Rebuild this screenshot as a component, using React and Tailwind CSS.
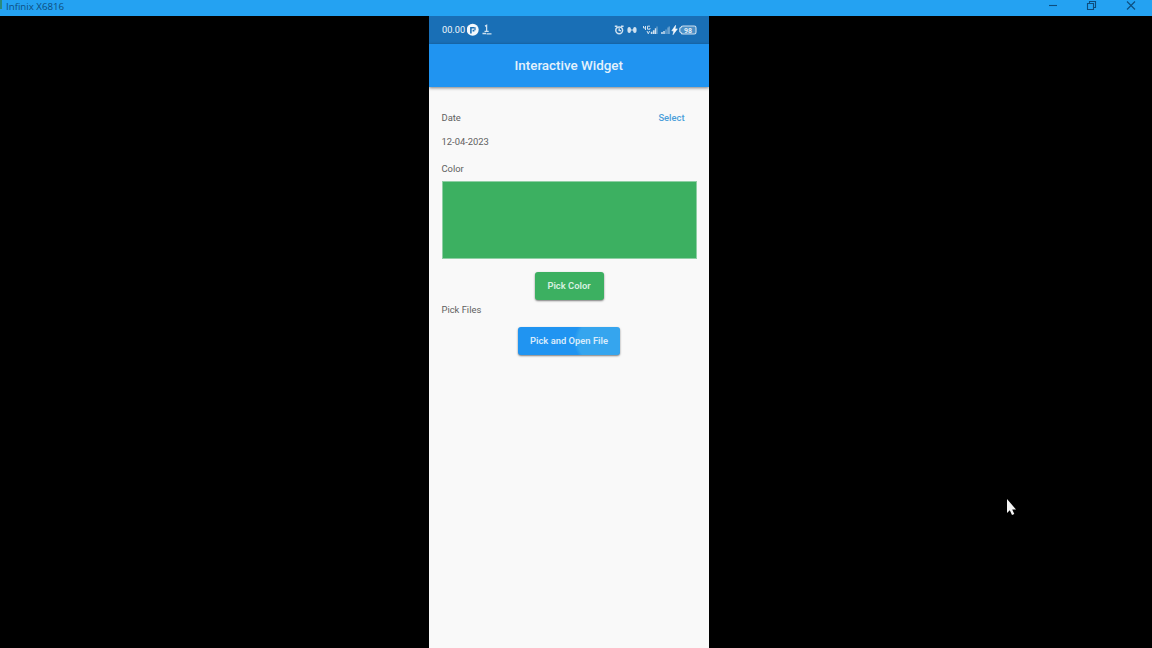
import React from 'react';

function TitleBar() {
  return (
    <header className="flex h-4 w-full shrink-0 items-start justify-between overflow-hidden bg-[#24a2f2]">
      <div className="flex items-start">
        <div className="h-[9px] w-[2px] bg-[#2b8a7c]" />
        <span className="ml-1 font-['Open_Sans',sans-serif] text-[9.7px] leading-[13px] text-[#0d4d7e]">Infinix X6816</span>
      </div>
      <svg width="104" height="12" viewBox="0 0 104 12" fill="none" stroke="#0d4d7e" strokeWidth="1.1">
        <path d="M1 5.5h8" />
        <path d="M39.5 3.5h6v6h-6zM41.5 3.5v-2h6v6h-2" />
        <path d="M79 1.5l8 8M87 1.5l-8 8" />
      </svg>
    </header>
  );
}

function StatusBar() {
  return (
    <div className="flex h-7 shrink-0 items-center justify-between bg-[#196fb6] pr-3 pl-[13px]">
      <div className="flex items-center">
        <span className="w-[23px] whitespace-nowrap text-[9.2px] leading-3 text-[#f0f7fc]">00.00</span>
        <svg className="ml-[2px]" width="28" height="14" viewBox="0 0 28 14">
          <circle cx="5.7" cy="6.8" r="6" fill="#f3f8fc" />
          <path d="M3.9 10.5V4.8h3.6M5.6 7.6h1.8" fill="none" stroke="#196fb6" strokeWidth="1.6" />
          <path d="M8 4.3v3" stroke="#196fb6" strokeWidth="1.2" />
          <path d="M18 3.2l1.6-.8v5.8M17.5 8.3h4.2M15.5 10.5h3.5M19.5 10.8h5" fill="none" stroke="#cfe1f0" strokeWidth="1.3" />
        </svg>
      </div>
      <svg width="83" height="14" viewBox="0 0 83 14" fill="none" stroke="#cfe1f0">
        <circle cx="5.2" cy="7.3" r="3.4" strokeWidth="1.5" />
        <path d="M.8 3.2h2.6M9.6 3.2H7M5.2 5.2v2.3l1.8.3" strokeWidth="1.4" />
        <ellipse cx="15.2" cy="7" rx="1.8" ry="3" fill="#cfe1f0" stroke="none" />
        <ellipse cx="20.8" cy="7" rx="1.8" ry="3" fill="#cfe1f0" stroke="none" />
        <path d="M17 7h2" strokeWidth="1.2" />
        <path d="M29.5 3v2h2M31.5 3v4M36 3.2h-2.5v3h2.5V5M33 8l1.3 2.8L35.6 8" strokeWidth="1" />
        <path d="M37.6 11V8.8M39.7 11V7.3M41.6 11V5.3" strokeWidth="1.6" />
        <path d="M43 11V3.5" stroke="#6da4d0" strokeWidth="1.3" />
        <path d="M48 11V9M50 11V8" strokeWidth="1.5" />
        <path d="M52 11V6.5M54 11V4.5M55.2 11V3.5" stroke="#6da4d0" strokeWidth="1.4" />
        <path d="M61.6 2.3L57.8 7.8h2l-.8 3.9 4.4-5.8h-2.3z" fill="#f3f8fc" stroke="#f3f8fc" strokeWidth=".6" />
        <path d="M69 3h11.2q1.8 0 1.8 1.8v4.4q0 1.8-1.8 1.8H69q-1.8 0-1.8-1.3l-1.4-1V5.3l1.4-1Q67.2 3 69 3z" fill="#4a8fc6" strokeWidth="1.1" />
        <text x="70" y="9.6" fill="#e7f1f9" stroke="none" fontFamily="Roboto, sans-serif" fontSize="7" fontWeight="700">98</text>
      </svg>
    </div>
  );
}

function Phone() {
  return (
    <main className="flex w-[279.5px] flex-col bg-[#f9f9f9] font-[Roboto,sans-serif] text-[9.4px] leading-3 text-[#606060]">
      <StatusBar />
      <div className="flex h-[43px] shrink-0 items-center justify-center bg-[#2094f1] shadow-[0_1px_3px_rgba(0,0,0,0.5)]">
        <h1 className="text-[13.4px] leading-4 font-medium text-[#e4f1fc]">Interactive Widget</h1>
      </div>
      <div className="flex flex-col pt-[25px] pr-3 pl-[12.5px]">
        <div className="flex justify-between pr-3">
          <span>Date</span>
          <span className="font-medium text-[#4c9fda]">Select</span>
        </div>
        <span className="mt-3">12-04-2023</span>
        <span className="mt-[15px]">Color</span>
        <div className="mt-[6px] h-[78px] border border-[#8fcfa5] bg-[#3cb061]" />
        <button className="mt-[12.5px] h-7 w-[69px] self-center rounded-[3px] bg-[#3cb061] font-semibold text-[#d9f0e0] shadow-[0_1px_2px_rgba(0,0,0,0.5)]">Pick Color</button>
        <span className="mt-1">Pick Files</span>
        <button className="mt-[11.5px] h-7 w-[102px] self-center overflow-hidden rounded-[3px] bg-[#2094f1] bg-[radial-gradient(circle_at_82px_14px,#35a5ee_22px,transparent_26px)] font-semibold text-[#d8ebfb] shadow-[0_1px_2px_rgba(0,0,0,0.5)]">Pick and Open File</button>
      </div>
    </main>
  );
}

export default function App() {
  return (
    <div className="relative flex h-[648px] w-[1152px] flex-col overflow-hidden bg-black">
      <TitleBar />
      <div className="flex min-h-0 flex-1 pl-[429px]">
        <Phone />
      </div>
      <svg className="absolute top-[498px] left-[1006px]" width="12" height="18" viewBox="0 0 12 18">
        <path d="M1 1v14l2.8-2.7L6 17l2.3-1-2.1-4.5H10z" fill="#f4f4f4" />
      </svg>
    </div>
  );
}
